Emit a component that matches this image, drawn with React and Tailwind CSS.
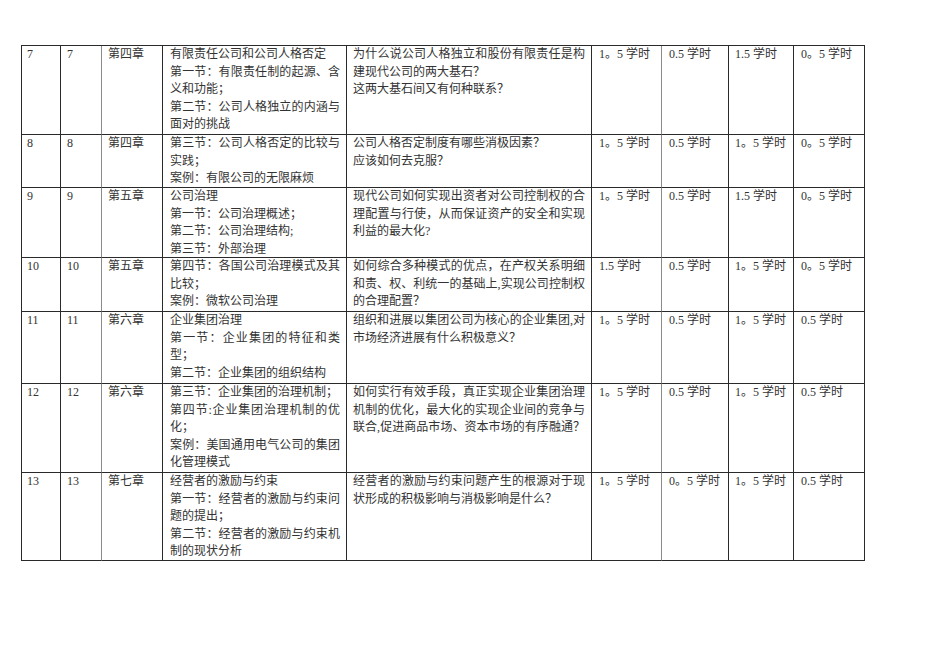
import React from "react";

const rows = [
  {
    h: "h-[89px]",
    a: "7",
    b: "7",
    ch: "第四章",
    c4: [
      ["有限责任公司和公司人格否定", 0],
      ["第一节：有限责任制的起源、含", 1],
      ["义和功能；", 0],
      ["第二节：公司人格独立的内涵与", 1],
      ["面对的挑战", 0],
    ],
    c5: [
      ["为什么说公司人格独立和股份有限责任是构", 1],
      ["建现代公司的两大基石？", 0],
      ["这两大基石间又有何种联系？", 0],
    ],
    t: ["1。5 学时", "0.5 学时", "1.5 学时", "0。5 学时"],
  },
  {
    h: "h-[53px]",
    a: "8",
    b: "8",
    ch: "第四章",
    c4: [
      ["第三节：公司人格否定的比较与", 1],
      ["实践；", 0],
      ["案例：有限公司的无限麻烦", 0],
    ],
    c5: [
      ["公司人格否定制度有哪些消极因素？", 0],
      ["应该如何去克服？", 0],
    ],
    t: ["1。5 学时", "0.5 学时", "1。5 学时", "0。5 学时"],
  },
  {
    h: "h-[70px]",
    a: "9",
    b: "9",
    ch: "第五章",
    c4: [
      ["公司治理", 0],
      ["第一节：公司治理概述；", 0],
      ["第二节：公司治理结构;", 0],
      ["第三节：外部治理", 0],
    ],
    c5: [
      ["现代公司如何实现出资者对公司控制权的合", 1],
      ["理配置与行使，从而保证资产的安全和实现", 1],
      ["利益的最大化?", 0],
    ],
    t: ["1。5 学时", "0.5 学时", "1.5 学时", "0。5 学时"],
  },
  {
    h: "h-[54px]",
    a: "10",
    b: "10",
    ch: "第五章",
    c4: [
      ["第四节：各国公司治理模式及其", 1],
      ["比较；", 0],
      ["案例：微软公司治理", 0],
    ],
    c5: [
      ["如何综合多种模式的优点，在产权关系明细", 1],
      ["和责、权、利统一的基础上,实现公司控制权", 1],
      ["的合理配置？", 0],
    ],
    t: ["1.5 学时", "0.5 学时", "1。5 学时", "0。5 学时"],
  },
  {
    h: "h-[72px]",
    a: "11",
    b: "11",
    ch: "第六章",
    c4: [
      ["企业集团治理", 0],
      ["第一节：企业集团的特征和类", 1],
      ["型；", 0],
      ["第二节：企业集团的组织结构", 0],
    ],
    c5: [
      ["组织和进展以集团公司为核心的企业集团,对", 1],
      ["市场经济进展有什么积极意义？", 0],
    ],
    t: ["1。5 学时", "0.5 学时", "1。5 学时", "0.5 学时"],
  },
  {
    h: "h-[89px]",
    a: "12",
    b: "12",
    ch: "第六章",
    c4: [
      ["第三节：企业集团的治理机制；", 0],
      ["第四节:企业集团治理机制的优", 1],
      ["化；", 0],
      ["案例：美国通用电气公司的集团", 1],
      ["化管理模式", 0],
    ],
    c5: [
      ["如何实行有效手段，真正实现企业集团治理", 1],
      ["机制的优化，最大化的实现企业间的竞争与", 1],
      ["联合,促进商品市场、资本市场的有序融通？", 1],
    ],
    t: ["1。5 学时", "0.5 学时", "1。5 学时", "0.5 学时"],
  },
  {
    h: "h-[88px]",
    a: "13",
    b: "13",
    ch: "第七章",
    c4: [
      ["经营者的激励与约束", 0],
      ["第一节：经营者的激励与约束问", 1],
      ["题的提出；", 0],
      ["第二节：经营者的激励与约束机", 1],
      ["制的现状分析", 0],
    ],
    c5: [
      ["经营者的激励与约束问题产生的根源对于现", 1],
      ["状形成的积极影响与消极影响是什么？", 0],
    ],
    t: ["1。5 学时", "0。5 学时", "1。5 学时", "0.5 学时"],
  },
];

function Lines({ lines }) {
  return (
    <div>
      {lines.map(([txt, j], i) => (
        <div
          key={i}
          className={
            j
              ? "whitespace-nowrap text-justify [text-align-last:justify]"
              : "whitespace-nowrap"
          }
        >
          {txt}
        </div>
      ))}
    </div>
  );
}

export default function App() {
  const cell = "border-r border-b border-[#2a2a2a] overflow-hidden";
  return (
    <div
      className="w-[950px] h-[672px] bg-white pt-[45px] pl-[21px] text-[12px] leading-[17.6px] text-[#333333]"
      style={{ fontFamily: '"Liberation Serif", "Noto Sans CJK SC", serif' }}
    >
      <div className="w-[844px] border-l border-t border-[#2a2a2a]">
        {rows.map((r, i) => (
          <div
            key={i}
            className={`grid grid-cols-[39px_41px_61px_184px_245px_70px_67px_65px_71px] ${r.h}`}
          >
            <div className={`${cell} pl-[5px]`}>{r.a}</div>
            <div className={`${cell} pl-[6px] border-r-[#8a8a8a]`}>{r.b}</div>
            <div className={`${cell} pl-[6px]`}>{r.ch}</div>
            <div className={`${cell} pl-[7px] pr-[6px]`}>
              <Lines lines={r.c4} />
            </div>
            <div className={`${cell} pl-[6px] pr-[6px]`}>
              <Lines lines={r.c5} />
            </div>
            <div className={`${cell} pl-[7px] whitespace-nowrap border-r-[#8a8a8a]`}>{r.t[0]}</div>
            <div className={`${cell} pl-[7px] whitespace-nowrap`}>{r.t[1]}</div>
            <div className={`${cell} pl-[6px] whitespace-nowrap`}>{r.t[2]}</div>
            <div className={`${cell} pl-[7px] whitespace-nowrap`}>{r.t[3]}</div>
          </div>
        ))}
      </div>
    </div>
  );
}
